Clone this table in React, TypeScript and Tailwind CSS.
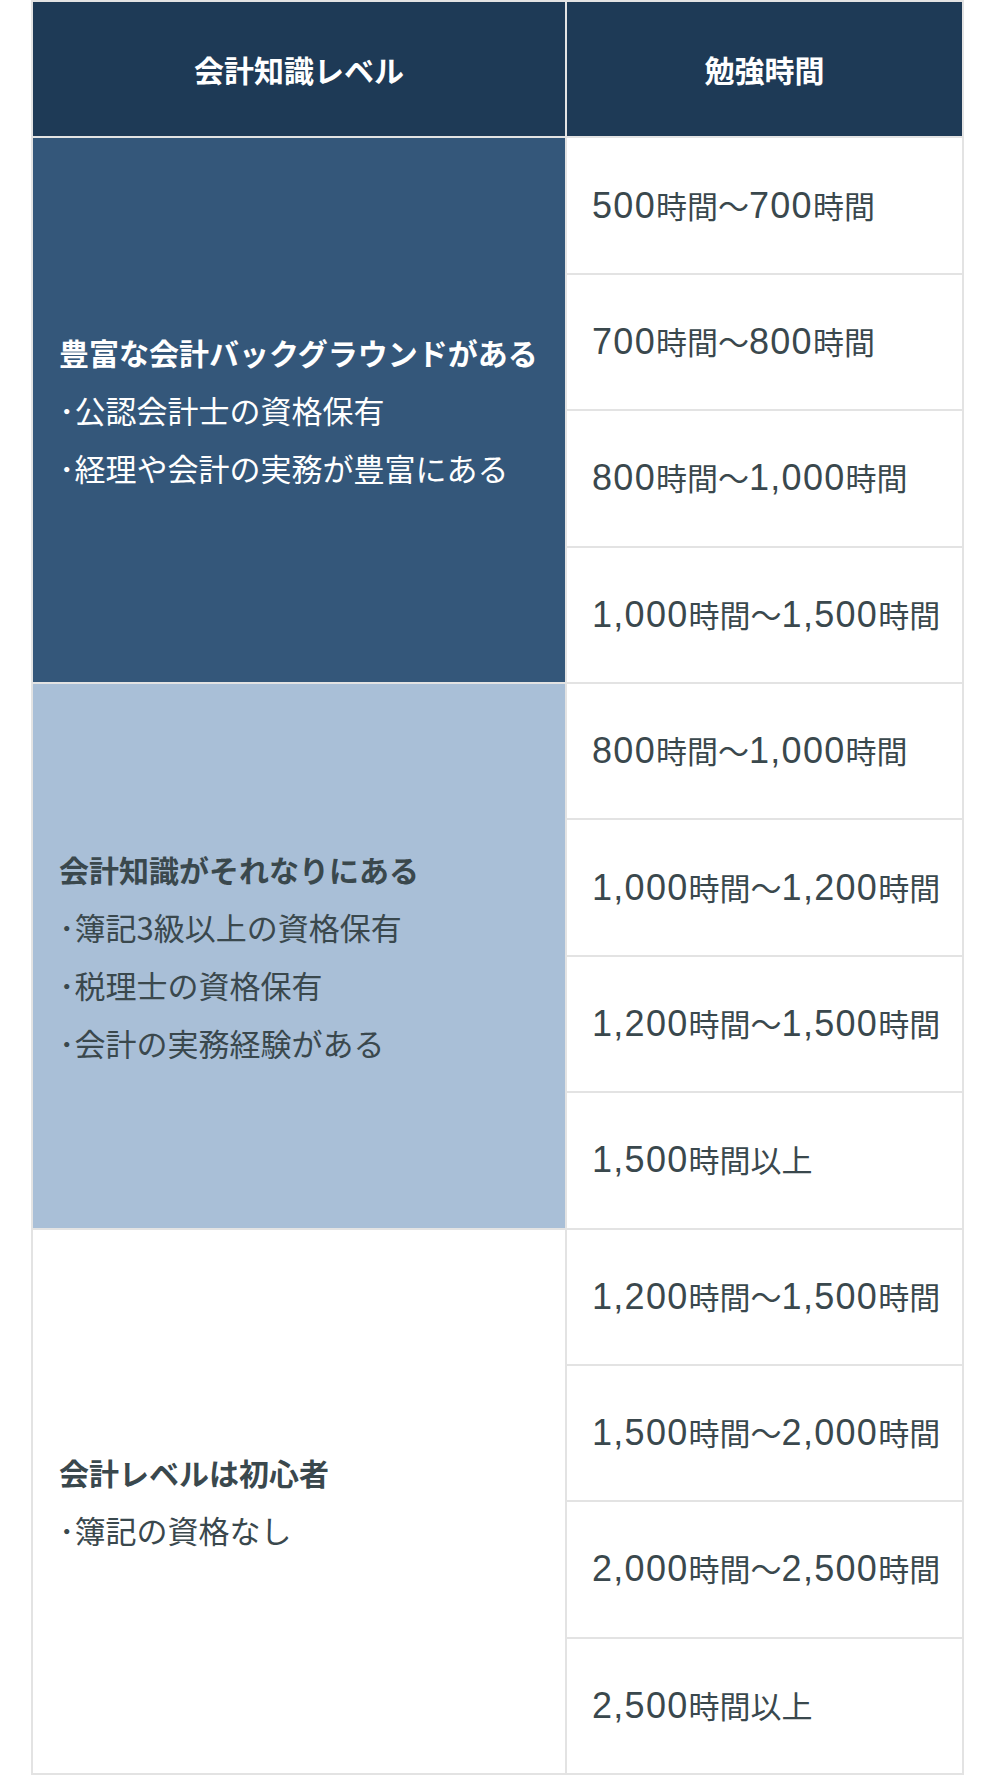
import React from 'react';

type Group = {
  title: string;
  bullets: string[];
  hours: string[];
  cellClass: string;
  textClass: string;
};

const groups: Group[] = [
  {
    title: '豊富な会計バックグラウンドがある',
    bullets: ['公認会計士の資格保有', '経理や会計の実務が豊富にある'],
    hours: ['500時間〜700時間', '700時間〜800時間', '800時間〜1,000時間', '1,000時間〜1,500時間'],
    cellClass: 'bg-[#34577a]',
    textClass: 'text-white',
  },
  {
    title: '会計知識がそれなりにある',
    bullets: ['簿記3級以上の資格保有', '税理士の資格保有', '会計の実務経験がある'],
    hours: ['800時間〜1,000時間', '1,000時間〜1,200時間', '1,200時間〜1,500時間', '1,500時間以上'],
    cellClass: 'bg-[#a9bfd7]',
    textClass: 'text-[#3a484d]',
  },
  {
    title: '会計レベルは初心者',
    bullets: ['簿記の資格なし'],
    hours: ['1,200時間〜1,500時間', '1,500時間〜2,000時間', '2,000時間〜2,500時間', '2,500時間以上'],
    cellClass: 'bg-white',
    textClass: 'text-[#3a484d]',
  },
];

// 数字部分だけ欧文フォントで少し大きく表示
function renderHours(text: string) {
  return text.split(/([\d,]+)/).map((part, i) =>
    /\d/.test(part) ? (
      <span key={i} className="font-['Liberation_Sans',sans-serif] text-[36px] tracking-[1.3px]">
        {part}
      </span>
    ) : (
      <span key={i}>{part}</span>
    )
  );
}

export default function App() {
  return (
    <div className="min-h-[1775px] bg-white font-['Noto_Sans_CJK_JP','Noto_Sans',sans-serif]">
      <div className="ml-[31px] w-[933px] border-l-2 border-t-2 border-[#e3e3e3]">
        {/* ヘッダー */}
        <div className="flex">
          <div className="flex h-[136.4px] w-[534px] items-center justify-center border-b-2 border-r-2 border-[#e3e3e3] bg-[#1e3a56] text-[30px] font-bold text-white">
            会計知識レベル
          </div>
          <div className="flex h-[136.4px] w-[397px] items-center justify-center border-b-2 border-r-2 border-[#e3e3e3] bg-[#1e3a56] text-[30px] font-bold text-white">
            勉強時間
          </div>
        </div>

        {groups.map((group) => (
          <div key={group.title} className="flex">
            <div
              className={`flex w-[534px] flex-col justify-center border-b-2 border-r-2 border-[#e3e3e3] pl-[26px] leading-[58px] ${group.cellClass} ${group.textClass}`}
            >
              <p className="text-[30px] font-bold">{group.title}</p>
              {group.bullets.map((b) => (
                <p key={b} className="text-[31px]">
                  ･{b}
                </p>
              ))}
            </div>
            <div className="w-[397px]">
              {group.hours.map((h, i) => (
                <div
                  key={i}
                  className="flex h-[136.4px] items-center border-b-2 border-r-2 border-[#e3e3e3] pl-[25px] text-[31px] leading-none text-[#3a484d]"
                >
                  <p>{renderHours(h)}</p>
                </div>
              ))}
            </div>
          </div>
        ))}
      </div>
    </div>
  );
}
